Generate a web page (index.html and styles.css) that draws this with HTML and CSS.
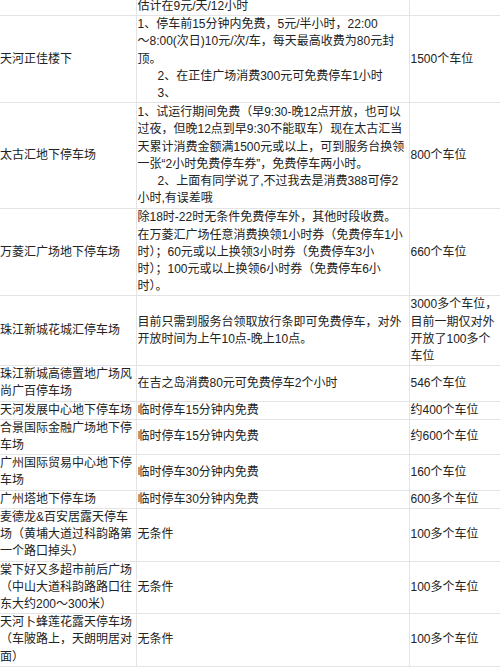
FILE: index.html
```html
<!DOCTYPE html>
<html lang="zh-CN">
<head>
<meta charset="utf-8">
<title>停车场</title>
<link rel="stylesheet" href="styles.css">
</head>
<body>
<table class="park">
  <colgroup>
    <col class="c-name">
    <col class="c-rule">
    <col class="c-num">
  </colgroup>
  <tr>
    <td></td>
    <td>估计在9元/天/12小时</td>
    <td></td>
  </tr>
  <tr>
    <td>天河正佳楼下</td>
    <td>1、停车前15分钟内免费，5元/半小时，22:00<br>～8:00(次日)10元/次/车，每天最高收费为80元封<br>顶。<br><span class="ind">2、在正佳广场消费300元可免费停车1小时</span><br><span class="ind">3、</span></td>
    <td>1500个车位</td>
  </tr>
  <tr class="tall">
    <td>太古汇地下停车场</td>
    <td>1、试运行期间免费（早9:30-晚12点开放，也可以<br>过夜，但晚12点到早9:30不能取车）现在太古汇当<br>天累计消费金额满1500元或以上，可到服务台换领<br>一张“2小时免费停车券”，免费停车两小时。<br><span class="ind">2、上面有同学说了,不过我去是消费388可停2</span><br>小时,有误差哦</td>
    <td>800个车位</td>
  </tr>
  <tr>
    <td>万菱汇广场地下停车场</td>
    <td>除18时-22时无条件免费停车外，其他时段收费。<br>在万菱汇广场任意消费换领1小时券（免费停车1小<br>时）；60元或以上换领3小时券（免费停车3小<br>时）；100元或以上换领6小时券（免费停车6小<br>时）。</td>
    <td>660个车位</td>
  </tr>
  <tr>
    <td>珠江新城花城汇停车场</td>
    <td>目前只需到服务台领取放行条即可免费停车，对外<br>开放时间为上午10点-晚上10点。</td>
    <td>3000多个车位，<br>目前一期仅对外<br>开放了100多个<br>车位</td>
  </tr>
  <tr>
    <td>珠江新城高德置地广场风<br>尚广百停车场</td>
    <td>在吉之岛消费80元可免费停车2个小时</td>
    <td>546个车位</td>
  </tr>
  <tr>
    <td>天河发展中心地下停车场</td>
    <td>临时停车15分钟内免费</td>
    <td>约400个车位</td>
  </tr>
  <tr>
    <td>合景国际金融广场地下停<br>车场</td>
    <td>临时停车15分钟内免费</td>
    <td>约600个车位</td>
  </tr>
  <tr>
    <td>广州国际贸易中心地下停<br>车场</td>
    <td>临时停车30分钟内免费</td>
    <td>160个车位</td>
  </tr>
  <tr>
    <td>广州塔地下停车场</td>
    <td>临时停车30分钟内免费</td>
    <td>600多个车位</td>
  </tr>
  <tr>
    <td>麦德龙&amp;百安居露天停车<br>场（黄埔大道过科韵路第<br>一个路口掉头）</td>
    <td>无条件</td>
    <td>100多个车位</td>
  </tr>
  <tr>
    <td>棠下好又多超市前后广场<br>（中山大道科韵路路口往<br>东大约200～300米）</td>
    <td>无条件</td>
    <td>100多个车位</td>
  </tr>
  <tr>
    <td>天河卜蜂莲花露天停车场<br>（车陂路上，天朗明居对<br>面）</td>
    <td>无条件</td>
    <td>100多个车位</td>
  </tr>
  <tr>
    <td>大塘萝岗村路口停车场（西<br>侧）</td>
    <td>无条件</td>
    <td>100多个车位</td>
  </tr>
</table>
</body>
</html>
```

FILE: styles.css
```css
html, body {
  margin: 0;
  padding: 0;
  background: #ffffff;
  overflow: hidden;
}

.park {
  border-collapse: collapse;
  table-layout: fixed;
  width: 520px;
  margin-top: -2px;
  font-family: "Liberation Sans", "Noto Sans CJK SC", sans-serif;
  font-size: 12px;
  line-height: 17.2px;
  color: #222222;
}

.c-name { width: 136px; }
.c-rule { width: 273px; }
.c-num  { width: 111px; }

.park td {
  border: 1px solid #e4e4e4;
  padding: 0 0 0 1px;
  vertical-align: middle;
  white-space: nowrap;
  overflow: hidden;
}

.park tr:first-child td {
  border-top: none;
}

.park td:first-child {
  border-left: none;
  padding-left: 0;
}

.park tr.tall td {
  padding-top: 1px;
  padding-bottom: 1px;
}

.ind {
  padding-left: 20px;
}
```
